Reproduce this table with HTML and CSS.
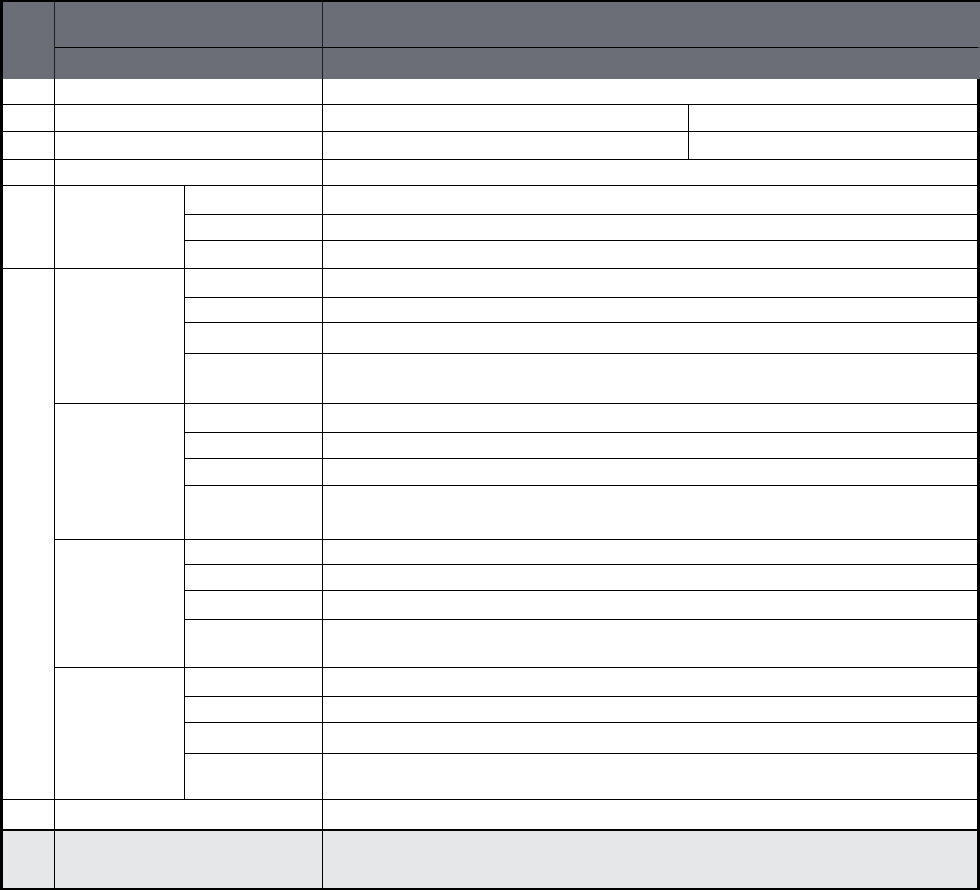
FILE: index.html
```html
<!DOCTYPE html>
<html lang="en">
<head>
    <meta charset="UTF-8">
    <meta name="viewport" content="width=device-width, initial-scale=1.0">
    <title>Spec Sheet</title>
    <link rel="stylesheet" href="styles.css">
</head>
<body>
    <div class="sheet">
        <!-- Header -->
        <div class="cell head rows-2 no-bottom"></div>
        <div class="cell head cols-2"></div>
        <div class="cell head cols-2 edge"></div>
        <div class="cell head cols-2 no-bottom"></div>
        <div class="cell head cols-2 edge no-bottom"></div>

        <!-- Single rows -->
        <div class="cell"></div>
        <div class="cell cols-2"></div>
        <div class="cell cols-2 last"></div>

        <div class="cell"></div>
        <div class="cell cols-2"></div>
        <div class="cell"></div>
        <div class="cell last"></div>

        <div class="cell"></div>
        <div class="cell cols-2"></div>
        <div class="cell"></div>
        <div class="cell last"></div>

        <div class="cell"></div>
        <div class="cell cols-2"></div>
        <div class="cell cols-2 last"></div>

        <!-- Group A -->
        <div class="cell rows-3"></div>
        <div class="cell rows-3"></div>
        <div class="cell"></div>
        <div class="cell cols-2 last"></div>
        <div class="cell"></div>
        <div class="cell cols-2 last"></div>
        <div class="cell"></div>
        <div class="cell cols-2 last"></div>

        <!-- Group B -->
        <div class="cell rows-16"></div>

        <div class="cell rows-4"></div>
        <div class="cell"></div>
        <div class="cell cols-2 last"></div>
        <div class="cell"></div>
        <div class="cell cols-2 last"></div>
        <div class="cell"></div>
        <div class="cell cols-2 last"></div>
        <div class="cell"></div>
        <div class="cell cols-2 last"></div>

        <div class="cell rows-4"></div>
        <div class="cell"></div>
        <div class="cell cols-2 last"></div>
        <div class="cell"></div>
        <div class="cell cols-2 last"></div>
        <div class="cell"></div>
        <div class="cell cols-2 last"></div>
        <div class="cell"></div>
        <div class="cell cols-2 last"></div>

        <div class="cell rows-4"></div>
        <div class="cell"></div>
        <div class="cell cols-2 last"></div>
        <div class="cell"></div>
        <div class="cell cols-2 last"></div>
        <div class="cell"></div>
        <div class="cell cols-2 last"></div>
        <div class="cell"></div>
        <div class="cell cols-2 last"></div>

        <div class="cell rows-4"></div>
        <div class="cell"></div>
        <div class="cell cols-2 last"></div>
        <div class="cell"></div>
        <div class="cell cols-2 last"></div>
        <div class="cell"></div>
        <div class="cell cols-2 last"></div>
        <div class="cell"></div>
        <div class="cell cols-2 last"></div>

        <!-- Closing rows -->
        <div class="cell thick-bottom"></div>
        <div class="cell cols-2 thick-bottom"></div>
        <div class="cell cols-2 last thick-bottom"></div>

        <div class="cell foot thick-bottom"></div>
        <div class="cell foot cols-2 thick-bottom"></div>
        <div class="cell foot cols-2 last thick-bottom"></div>
    </div>
</body>
</html>
```

FILE: styles.css
```css
/* General styling */
body {
    font-family: "Liberation Sans", Arial, sans-serif;
    margin: 0;
    padding: 0;
    background: #fff;
}
.sheet {
    display: grid;
    width: 980px;
    box-sizing: border-box;
    border-left: 3px solid #000;
    border-top: 2px solid #000;
    grid-template-columns: 52px 130px 138px 366px 291px;
    grid-template-rows:
        46px 31px
        26px 27px 28px 26px
        29px 26px 28px
        29px 25px 31px 50px
        29px 26px 27px 54px
        25px 26px 29px 48px
        29px 26px 31px 46px
        31px 59px;
}
.cell {
    box-sizing: border-box;
    border-right: 1px solid #000;
    border-bottom: 1px solid #000;
    background: #fff;
}
.cell.last {
    border-right: 3px solid #000;
}
/* Spans */
.cols-2 { grid-column: span 2; }
.rows-2 { grid-row: span 2; }
.rows-3 { grid-row: span 3; }
.rows-4 { grid-row: span 4; }
.rows-16 { grid-row: span 16; }
/* Header and footer */
.cell.head {
    background: #6b6e76;
    border-right-color: #1e1f22;
}
.cell.head.edge {
    border-right: 3px solid #6b6e76;
}
.cell.no-bottom {
    border-bottom: none;
}
.cell.thick-bottom {
    border-bottom-width: 2px;
}
.cell.foot {
    background: #e6e7e9;
}
```
